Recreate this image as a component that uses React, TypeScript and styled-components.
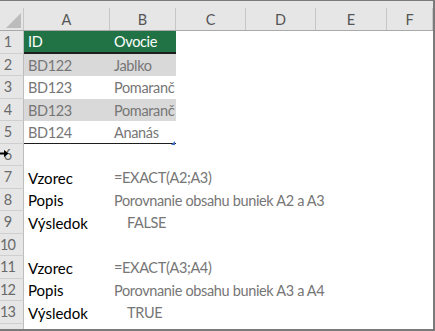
import React from "react";
import styled, { createGlobalStyle } from "styled-components";

const Global = createGlobalStyle`
  html, body { margin: 0; padding: 0; background: #fff; }
  body { font-family: Lato, "Open Sans", sans-serif; }
`;

const COLS = [86, 66, 70, 70, 71, 46];
const LETTERS = ["A", "B", "C", "D", "E", "F"];
const ROW_H = 22.5;

const Sheet = styled.div`
  position: relative;
  width: 435px;
  height: 331px;
  box-sizing: border-box;
  border-top: 1px solid #7a7a7a;
  border-right: 2px solid #7a7a7a;
  border-bottom: 2px solid #7a7a7a;
  overflow: hidden;
  background: #fff;
  font-family: Lato, "Open Sans", sans-serif;
`;

const HeaderBand = styled.div`
  height: 29px;
  background: #e6e6e6;
  display: flex;
  align-items: flex-end;
  border-bottom: 1px solid #a9a9a9;
`;

const Corner = styled.div`
  position: relative;
  width: 24px;
  height: 22px;
  box-sizing: border-box;
  border-right: 1px solid #c6c6c6;
  flex: none;
`;

const CornerTri = styled.div`
  position: absolute;
  right: 2px;
  bottom: 2px;
  width: 0;
  height: 0;
  border-left: 15px solid transparent;
  border-bottom: 15px solid #bcbcbc;
`;

const ColHead = styled.div<{ $w: number }>`
  width: ${(p) => p.$w}px;
  height: 22px;
  flex: none;
  box-sizing: border-box;
  border-right: 1px solid #c6c6c6;
  display: flex;
  align-items: center;
  justify-content: center;
  font-size: 14.5px;
  color: #555;
`;

const Row = styled.div`
  position: relative;
  display: flex;
  height: ${ROW_H}px;
`;

const RowHead = styled.div`
  width: 24px;
  flex: none;
  box-sizing: border-box;
  background: #e6e6e6;
  border-right: 1px solid #bdbdbd;
  border-bottom: 1px solid #cfcfcf;
  display: flex;
  align-items: center;
  justify-content: center;
  padding-right: 8px;
  font-size: 14.5px;
  color: #6a6a6a;
  letter-spacing: -0.8px;
`;

const Cell = styled.div<{
  $w: number;
  $bg?: string;
  $color?: string;
  $indent?: number;
  $overflow?: boolean;
  $bottom?: string;
  $label?: boolean;
}>`
  width: ${(p) => p.$w}px;
  flex: none;
  box-sizing: border-box;
  background: ${(p) => p.$bg || "transparent"};
  color: ${(p) => p.$color || "#000"};
  display: flex;
  align-items: center;
  padding-left: ${(p) => 4 + (p.$indent || 0)}px;
  padding-top: 1px;
  font-size: ${(p) => (p.$label ? "15px" : "14.5px")};
  letter-spacing: ${(p) => (p.$label ? "0" : "-0.35px")};
  white-space: nowrap;
  overflow: ${(p) => (p.$overflow ? "visible" : "hidden")};
  border-bottom: ${(p) => p.$bottom || "none"};
`;

const Handle = styled.div`
  position: absolute;
  left: 171px;
  bottom: -1px;
  width: 0;
  height: 0;
  border-left: 4px solid transparent;
  border-bottom: 4px solid #3c6fc4;
`;

const Cursor = styled.svg`
  position: absolute;
  left: 0;
  top: 148px;
`;

type R = {
  n: number;
  a?: string;
  b?: string;
  bg?: string;
  aColor?: string;
  bColor?: string;
  bIndent?: number;
  bottom?: string;
  handle?: boolean;
  label?: boolean;
};

const GREEN = "#217346";
const GRAY_BG = "#d9d9d9";
const TXT_GRAY = "#767676";

const rows: R[] = [
  { n: 1, a: "ID", b: "Ovocie", bg: GREEN, aColor: "#fff", bColor: "#fff", bottom: "2px solid #1e1e1e" },
  { n: 2, a: "BD122", b: "Jablko", bg: GRAY_BG, aColor: TXT_GRAY, bColor: TXT_GRAY },
  { n: 3, a: "BD123", b: "Pomaranč", aColor: TXT_GRAY, bColor: TXT_GRAY },
  { n: 4, a: "BD123", b: "Pomaranč", bg: GRAY_BG, aColor: TXT_GRAY, bColor: TXT_GRAY },
  { n: 5, a: "BD124", b: "Ananás", aColor: TXT_GRAY, bColor: TXT_GRAY, bottom: "1px solid #1e1e1e", handle: true },
  { n: 6 },
  { n: 7, a: "Vzorec", b: "=EXACT(A2;A3)", bColor: TXT_GRAY, label: true },
  { n: 8, a: "Popis", b: "Porovnanie obsahu buniek A2 a A3", bColor: TXT_GRAY, label: true },
  { n: 9, a: "Výsledok", b: "FALSE", bColor: TXT_GRAY, bIndent: 13, label: true },
  { n: 10 },
  { n: 11, a: "Vzorec", b: "=EXACT(A3;A4)", bColor: TXT_GRAY, label: true },
  { n: 12, a: "Popis", b: "Porovnanie obsahu buniek A3 a A4", bColor: TXT_GRAY, label: true },
  { n: 13, a: "Výsledok", b: "TRUE", bColor: TXT_GRAY, bIndent: 13, label: true },
  { n: 14 },
];

export default function App() {
  return (
    <>
      <Global />
      <Sheet>
        <HeaderBand>
          <Corner>
            <CornerTri />
          </Corner>
          {LETTERS.map((l, i) => (
            <ColHead key={l} $w={COLS[i]}>
              {l}
            </ColHead>
          ))}
        </HeaderBand>
        {rows.map((r) => (
          <Row key={r.n}>
            <RowHead>{r.n}</RowHead>
            <Cell $w={COLS[0]} $bg={r.bg} $color={r.aColor} $bottom={r.bottom} $label={r.label}>
              {r.a}
            </Cell>
            <Cell
              $w={COLS[1]}
              $bg={r.bg}
              $color={r.bColor}
              $indent={r.bIndent}
              $bottom={r.bottom}
              $overflow={r.n > 5}
            >
              {r.b}
            </Cell>
            {r.handle && <Handle />}
          </Row>
        ))}
        <Cursor width="9" height="9" viewBox="0 0 9 9">
          <path d="M0 4.5 H5" stroke="#000" strokeWidth="2" />
          <path d="M4 1 L8.5 4.5 L4 8 Z" fill="#000" />
        </Cursor>
      </Sheet>
    </>
  );
}
